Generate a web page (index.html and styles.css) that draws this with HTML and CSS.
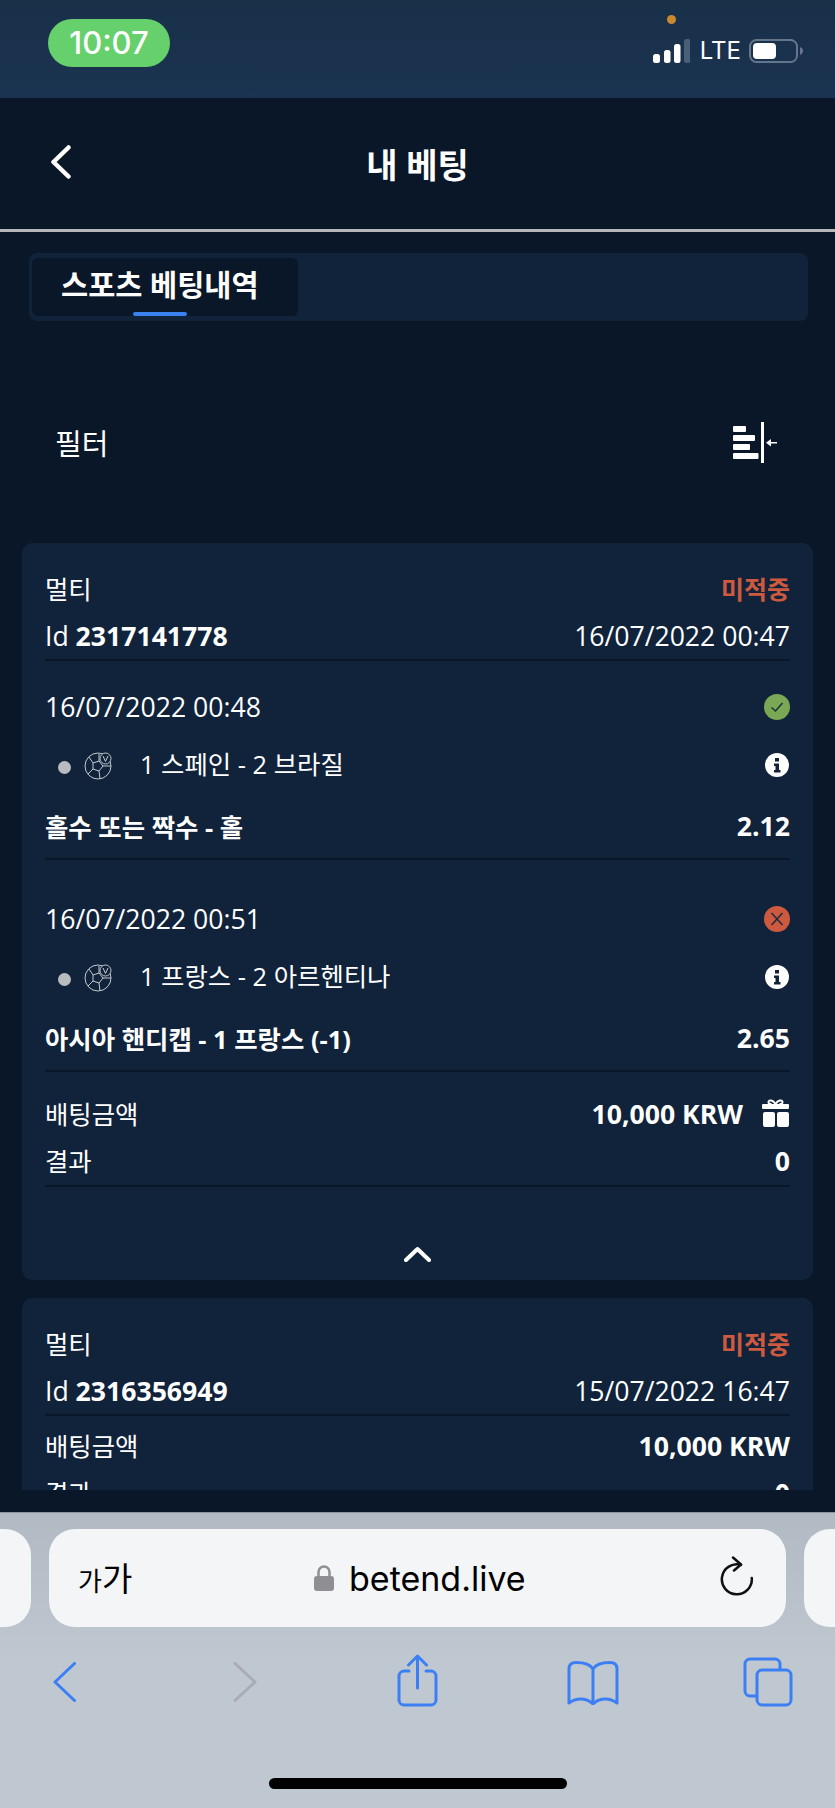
FILE: index.html
```html
<!DOCTYPE html>
<html lang="ko">
<head>
    <meta charset="UTF-8">
    <meta name="viewport" content="width=device-width, initial-scale=1.0">
    <title>내 베팅</title>
    <link rel="stylesheet" href="styles.css">
</head>
<body>
    <!-- status bar -->
    <div class="statusbar">
        <div class="clock">10:07</div>
        <div class="status-dot"></div>
        <div class="status-right">
            <svg class="signal" width="37" height="24" viewBox="0 0 37 24">
                <rect x="0" y="15" width="7" height="9" rx="2.5" fill="#fff"/>
                <rect x="11" y="11" width="6.5" height="13" rx="2.5" fill="#fff"/>
                <rect x="21" y="5" width="6.5" height="19" rx="2.5" fill="#fff"/>
                <rect x="31" y="0" width="6.5" height="24" rx="2.5" fill="#4a6078"/>
            </svg>
            <span class="lte">LTE</span>
            <svg class="battery" width="55" height="24" viewBox="0 0 55 24">
                <rect x="1" y="1" width="47" height="22" rx="6.5" fill="none" stroke="#62778c" stroke-width="2"/>
                <rect x="4" y="4" width="23" height="16" rx="4" fill="#fff"/>
                <path d="M51 8c2 .8 3 2.2 3 4s-1 3.2-3 4z" fill="#62778c"/>
            </svg>
        </div>
    </div>

    <div class="app">
        <header class="topbar">
            <svg class="back" width="21" height="34" viewBox="0 0 21 34">
                <path d="M18.500 2.500 3.500 17l15 14.500" fill="none" stroke="#fff" stroke-width="4.500" stroke-linecap="round" stroke-linejoin="round"/>
            </svg>
            <h1>내 베팅</h1>
        </header>

        <div class="content">
            <div class="tabs">
                <div class="tab">스포츠 베팅내역</div>
            </div>

            <div class="filter">
                <span>필터</span>
                <svg width="44" height="41" viewBox="0 0 44 41">
                    <g fill="#fff">
                        <rect x="0" y="4" width="13" height="6" rx="1"/>
                        <rect x="0" y="13" width="22" height="6" rx="1"/>
                        <rect x="0" y="22" width="17" height="6" rx="1"/>
                        <rect x="0" y="31" width="25.500" height="6" rx="1"/>
                        <rect x="28" y="0" width="3" height="41"/>
                        <rect x="36" y="20" width="8" height="1.500"/>
                        <path d="M33 20.750 38 17v7.500z"/>
                    </g>
                </svg>
            </div>

            <!-- bet 1 -->
            <section class="card">
                <div class="row"><span class="kr">멀티</span><span class="lost">미적중</span></div>
                <div class="row rule"><span>Id <b>2317141778</b></span><span>16/07/2022 00:47</span></div>

                <div class="leg">
                    <div class="row">
                        <span>16/07/2022 00:48</span>
                        <svg class="state" width="26" height="26" viewBox="0 0 26 26">
                            <circle cx="13" cy="13" r="13" fill="#7aa854"/>
                            <path d="M7.500 13.500l4 3.500 7-8" fill="none" stroke="#1c3040" stroke-width="1.500"/>
                        </svg>
                    </div>
                    <div class="row match">
                        <div class="teams">
                            <i class="live"></i>
                            <svg class="ball" width="28" height="28" viewBox="0 0 28 28">
                                <g fill="none" stroke="#c4c8cc" stroke-width="1">
                                    <circle cx="14" cy="14" r="13"/>
                                    <path d="M9 11l6-2 4 5-4 5-6-2zM9 11 5 5M15 9V2M19 14h8M15 19l1 8M9 17l-5 5"/>
                                    <circle cx="21.500" cy="6.500" r="5.500" fill="#10233b"/>
                                    <path d="M19 4l2.500 5.500L24 4"/>
                                </g>
                            </svg>
                            <span class="kr">1 스페인 - 2 브라질</span>
                        </div>
                        <svg class="info" width="24" height="24" viewBox="0 0 24 24">
                            <circle cx="12" cy="12" r="12" fill="#fff"/>
                            <path d="M10 5h4v3.500h-4zM9 10.500h5V17h1.500v2.500h-6.500V17h1.500v-4H9z" fill="#10233b"/>
                        </svg>
                    </div>
                    <div class="row market rule"><b class="kr">홀수 또는 짝수 - 홀</b><b>2.12</b></div>
                </div>

                <div class="leg">
                    <div class="row">
                        <span>16/07/2022 00:51</span>
                        <svg class="state" width="26" height="26" viewBox="0 0 26 26">
                            <circle cx="13" cy="13" r="13" fill="#cd5a3f"/>
                            <path d="M7.500 7l11 12M18.500 7l-11 12" fill="none" stroke="#1c2a3a" stroke-width="1.500"/>
                        </svg>
                    </div>
                    <div class="row match">
                        <div class="teams">
                            <i class="live"></i>
                            <svg class="ball" width="28" height="28" viewBox="0 0 28 28">
                                <g fill="none" stroke="#c4c8cc" stroke-width="1">
                                    <circle cx="14" cy="14" r="13"/>
                                    <path d="M9 11l6-2 4 5-4 5-6-2zM9 11 5 5M15 9V2M19 14h8M15 19l1 8M9 17l-5 5"/>
                                    <circle cx="21.500" cy="6.500" r="5.500" fill="#10233b"/>
                                    <path d="M19 4l2.500 5.500L24 4"/>
                                </g>
                            </svg>
                            <span class="kr">1 프랑스 - 2 아르헨티나</span>
                        </div>
                        <svg class="info" width="24" height="24" viewBox="0 0 24 24">
                            <circle cx="12" cy="12" r="12" fill="#fff"/>
                            <path d="M10 5h4v3.500h-4zM9 10.500h5V17h1.500v2.500h-6.500V17h1.500v-4H9z" fill="#10233b"/>
                        </svg>
                    </div>
                    <div class="row market rule"><b class="kr">아시아 핸디캡 - 1 프랑스 (-1)</b><b>2.65</b></div>
                </div>

                <div class="totals">
                    <div class="row tall">
                        <span class="kr">배팅금액</span>
                        <div class="stake">
                            <b>10,000 KRW</b>
                            <svg width="28" height="28" viewBox="0 0 28 28">
                                <g fill="#fff">
                                    <rect x="0" y="5" width="27" height="5" rx="1"/>
                                    <rect x="1" y="13" width="12" height="15" rx="2"/>
                                    <rect x="15" y="13" width="12" height="15" rx="2"/>
                                </g>
                                <path d="M13.500 5C11 1 7 .5 6.500 3c-.3 1.500 1 2 3 2M13.500 5C16 1 20 .5 20.500 3c.3 1.500-1 2-3 2" fill="none" stroke="#fff" stroke-width="2"/>
                            </svg>
                        </div>
                    </div>
                    <div class="row tall rule"><span class="kr">결과</span><b>0</b></div>
                </div>
                <div class="collapse">
                    <svg width="27" height="16" viewBox="0 0 27 16">
                        <path d="M2 14 13.500 3 25 14" fill="none" stroke="#fff" stroke-width="4" stroke-linecap="round" stroke-linejoin="round"/>
                    </svg>
                </div>
            </section>

            <!-- bet 2, cut by the bottom of the scroll area -->
            <section class="card">
                <div class="row"><span class="kr">멀티</span><span class="lost">미적중</span></div>
                <div class="row rule"><span>Id <b>2316356949</b></span><span>15/07/2022 16:47</span></div>
                <div class="totals short">
                    <div class="row tall"><span class="kr">배팅금액</span><b>10,000 KRW</b></div>
                    <div class="row tall"><span class="kr">결과</span><b>0</b></div>
                </div>
            </section>
        </div>
    </div>

    <!-- safari bar -->
    <footer class="browser">
        <div class="url-row">
            <div class="url-side left"></div>
            <div class="url">
                <span class="aa"><small>가</small>가</span>
                <div class="host">
                    <svg width="20" height="26" viewBox="0 0 20 26">
                        <path d="M4.500 12V7a5.500 5.500 0 0 1 11 0v5" fill="none" stroke="#8e8e93" stroke-width="2.500"/>
                        <rect x="0" y="11" width="20" height="15" rx="3" fill="#8e8e93"/>
                    </svg>
                    <span>betend.live</span>
                </div>
                <svg class="reload" width="34" height="40" viewBox="0 0 34 40">
                    <path d="M19 8.500A15 15 0 1 0 31.500 20" fill="none" stroke="#111" stroke-width="2.500" stroke-linecap="round" transform="rotate(8 17 23)"/>
                    <path d="M13 1.500l8 7-7 6" fill="none" stroke="#111" stroke-width="2.500" stroke-linecap="round" stroke-linejoin="round"/>
                </svg>
            </div>
            <div class="url-side right"></div>
        </div>
        <div class="tools">
            <svg class="t-back" width="23" height="40" viewBox="0 0 23 40">
                <path d="M21.500 1.500 2 20l19.500 18.500" fill="none" stroke="#3c7ff5" stroke-width="3" stroke-linecap="round" stroke-linejoin="round"/>
            </svg>
            <svg class="t-fwd" width="24" height="40" viewBox="0 0 24 40">
                <path d="M2 1.500 22 20 2 38.500" fill="none" stroke="#a7adb3" stroke-width="3" stroke-linecap="round" stroke-linejoin="round"/>
            </svg>
            <svg class="t-share" width="41" height="53" viewBox="0 0 41 53">
                <path d="M12 17H7a5 5 0 0 0-5 5v24a5 5 0 0 0 5 5h27a5 5 0 0 0 5-5V22a5 5 0 0 0-5-5h-5M20.500 34V2M11.500 11l9-9 9 9" fill="none" stroke="#3c7ff5" stroke-width="3" stroke-linecap="round" stroke-linejoin="round"/>
            </svg>
            <svg class="t-book" width="52" height="44" viewBox="0 0 52 44">
                <path d="M26 8C23 3 17 1.500 9 1.500 4 1.500 2 4 2 8v34c8-6 18-5 24 1 6-6 16-7 24-1V8c0-4-2-6.500-7-6.500C35 1.500 29 3 26 8zM26 8v35" fill="none" stroke="#3c7ff5" stroke-width="3" stroke-linejoin="round"/>
            </svg>
            <svg class="t-tabs" width="50" height="50" viewBox="0 0 50 50">
                <path d="M14 39H7a5 5 0 0 1-5-5V7a5 5 0 0 1 5-5h25a5 5 0 0 1 5 5v6" fill="none" stroke="#3c7ff5" stroke-width="3"/>
                <rect x="14" y="13" width="34" height="35" rx="5" fill="none" stroke="#3c7ff5" stroke-width="3"/>
            </svg>
        </div>
        <div class="home-bar"></div>
    </footer>
</body>
</html>
```
FILE: styles.css
```css
* {
    box-sizing: border-box;
}
body {
    margin: 0;
    width: 835px;
    height: 1808px;
    overflow: hidden;
    display: flex;
    flex-direction: column;
    background-color: #0a1728;
    color: #fff;
    font-family: "Open Sans", "Noto Sans CJK KR", sans-serif;
    font-size: 26.6px;
}
b {
    font-weight: 700;
}
svg {
    display: block;
    flex: none;
}

/* status bar */
.statusbar {
    position: relative;
    height: 98px;
    flex: none;
    background: linear-gradient(#193049, #1a3350);
    display: flex;
    justify-content: space-between;
    padding: 19px 31px 0 48px;
}
.clock {
    width: 122px;
    height: 48px;
    border-radius: 24px;
    background-color: #65d06c;
    font-family: "Inter", sans-serif;
    font-size: 31px;
    font-weight: 500;
    padding-bottom: 2px;
    display: flex;
    align-items: center;
    justify-content: center;
}
.status-dot {
    position: absolute;
    left: 667px;
    top: 15px;
    width: 9px;
    height: 9px;
    border-radius: 50%;
    background-color: #c98a2e;
}
.status-right {
    display: flex;
    align-items: center;
    height: 24px;
    margin-top: 20px;
}
.lte {
    font-family: "Inter", sans-serif;
    font-size: 24px;
    margin: 0 8px 0 10px;
    line-height: 24px;
}

/* header */
.app {
    flex: 1;
    min-height: 0;
    display: flex;
    flex-direction: column;
}
.topbar {
    height: 134px;
    flex: none;
    border-bottom: 3px solid #b5b7b9;
    display: flex;
    align-items: center;
    justify-content: center;
    position: relative;
}
.topbar h1 {
    margin: 0;
    font-size: 34px;
    font-weight: 700;
}
.back {
    position: absolute;
    left: 50px;
    top: 47px;
}
.content {
    height: 1258px;
    padding: 21px 22px 0;
    overflow: hidden;
}

/* tabs */
.tabs {
    height: 68px;
    margin: 0 5px 0 7px;
    padding: 5px 3px;
    background-color: #10233b;
    border-radius: 8px;
}
.tab {
    position: relative;
    width: 266px;
    height: 58px;
    background-color: #0a1728;
    border-radius: 6px;
    font-size: 29.500px;
    font-weight: 700;
    padding-left: 29px;
    line-height: 54px;
}
.tab::after {
    content: "";
    position: absolute;
    left: 101px;
    bottom: 0;
    width: 54px;
    height: 4px;
    border-radius: 2px;
    background-color: #3a82f0;
}
.filter {
    height: 60px;
    margin-top: 91px;
    padding: 0 36px 0 33px;
    display: flex;
    justify-content: space-between;
    align-items: center;
    font-size: 29px;
}

/* bet cards */
.card {
    background-color: #10233b;
    border-radius: 10px;
    padding: 24px 23px 0;
    margin-top: 71px;
}
.card + .card {
    margin-top: 18px;
}
.row {
    height: 46px;
    display: flex;
    justify-content: space-between;
    align-items: center;
    white-space: nowrap;
}
.tall {
    height: 47px;
    padding-bottom: 2px;
}
.tall.rule {
    height: 45px;
}
.rule {
    box-sizing: content-box;
    border-bottom: 2px solid #0a1728;
}
.kr {
    font-size: 25.400px;
    margin-bottom: 5px;
}
.market .kr,
.tall .kr {
    margin-bottom: 1px;
}
.lost {
    color: #cd5a3f;
    font-size: 25px;
    font-weight: 700;
    margin-bottom: 5px;
}
.leg {
    padding-top: 23px;
}
.leg + .leg {
    margin-top: 13px;
}
.match {
    margin-top: 12px;
    padding-right: 1px;
}
.market {
    margin-top: 15px;
    padding-bottom: 9px;
}
.teams {
    display: flex;
    align-items: center;
    padding-left: 13px;
}
.live {
    width: 13px;
    height: 13px;
    margin-top: 4px;
    border-radius: 50%;
    background-color: #b9bcbf;
}
.ball {
    margin: 2px 28px 0 13px;
}
.totals {
    margin-top: 19px;
}
.totals.short {
    margin-top: 7px;
}
.stake {
    display: flex;
    align-items: center;
    gap: 19px;
}
.stake svg {
    margin-bottom: 2px;
}
.collapse {
    height: 93px;
    display: flex;
    justify-content: center;
    align-items: flex-end;
    padding-bottom: 18px;
}

/* safari bar */
.browser {
    height: 296px;
    flex: none;
    border-top: 1px solid #8c959d;
    background: linear-gradient(#b1bac3, #bfc8d1 150px);
    display: flex;
    flex-direction: column;
    color: #000;
}
.url-row {
    display: flex;
    gap: 18px;
    margin-top: 16px;
    height: 98px;
    flex: none;
}
.url-side {
    width: 31px;
    background-color: #f3f5f7;
}
.url-side.left {
    border-radius: 0 26px 26px 0;
}
.url-side.right {
    border-radius: 26px 0 0 26px;
}
.url {
    width: 737px;
    border-radius: 26px;
    background-color: #f3f5f7;
    display: flex;
    align-items: center;
    justify-content: space-between;
    padding: 0 32px 0 29px;
    position: relative;
}
.aa {
    font-size: 33px;
    line-height: 40px;
    margin-top: 4px;
}
.aa small {
    font-size: 26px;
}
.host {
    position: absolute;
    left: 265px;
    top: 0;
    height: 100%;
    display: flex;
    align-items: center;
    gap: 15px;
    font-family: "Inter", sans-serif;
    font-size: 34px;
}
.reload {
    margin-top: -4px;
}
.tools {
    display: flex;
    align-items: flex-start;
    height: 60px;
    margin-top: 27px;
    flex: none;
}
.t-back {
    margin: 8px 0 0 53px;
}
.t-fwd {
    margin: 8px 0 0 157px;
}
.t-share {
    margin-left: 140px;
}
.t-book {
    margin: 7px 0 0 129px;
}
.t-tabs {
    margin: 3px 0 0 124px;
}
.home-bar {
    width: 298px;
    height: 11px;
    margin: 64px auto 0;
    border-radius: 6px;
    background-color: #000;
    flex: none;
}
```
